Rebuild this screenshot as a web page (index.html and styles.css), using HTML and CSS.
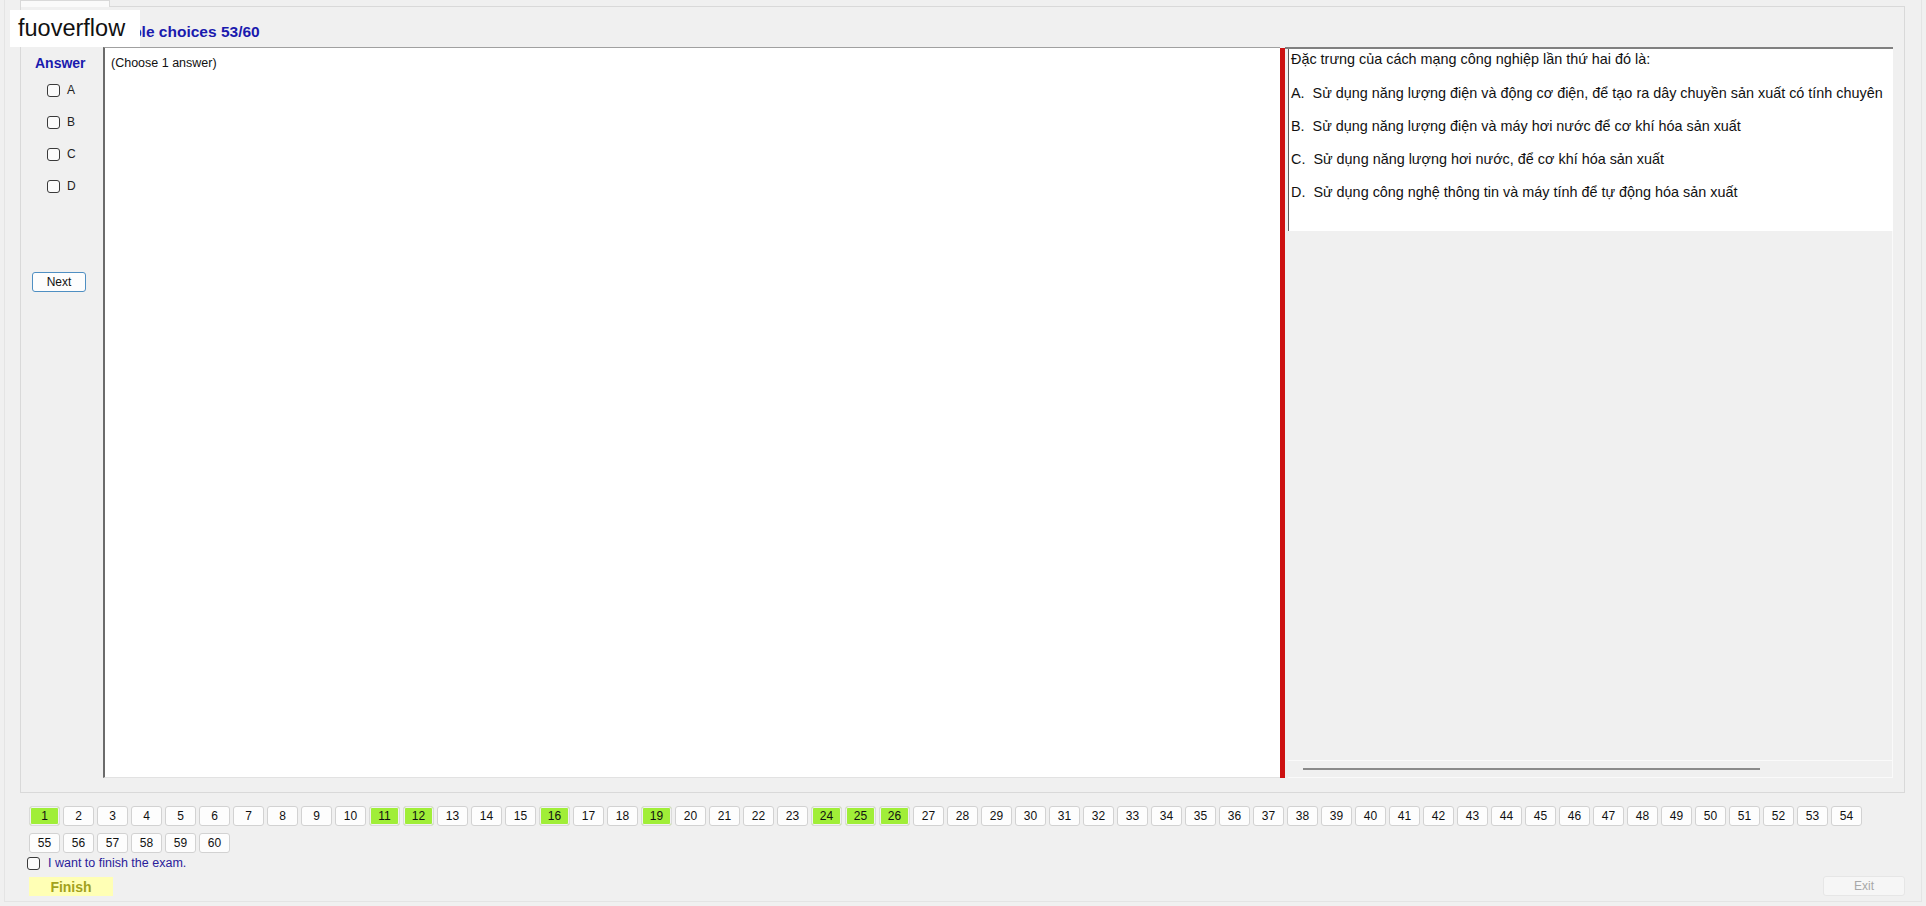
FILE: index.html
```html
<!DOCTYPE html>
<html lang="vi">
<head>
<meta charset="utf-8">
<title>Exam</title>
<link rel="stylesheet" href="styles.css">
</head>
<body>
<div class="window">
  <div class="tabs"><div class="tab"></div></div>
  <div class="tabpage">
    <div class="title-row">Multiple choices 53/60</div>
    <div class="main">
      <div class="answer-col">
        <div class="answer-label">Answer</div>
        <div class="opts">
          <label class="opt"><span class="cb"></span>A</label>
          <label class="opt"><span class="cb"></span>B</label>
          <label class="opt"><span class="cb"></span>C</label>
          <label class="opt"><span class="cb"></span>D</label>
        </div>
        <button class="next">Next</button>
      </div>
      <div class="question"><div class="hint">(Choose 1 answer)</div></div>
      <div class="divider"></div>
      <div class="content-panel">
        <div class="content-box">
          <p class="q-title">Đặc trưng của cách mạng công nghiệp lần thứ hai đó là:</p>
          <p class="q-opt">A.&nbsp; Sử dụng năng lượng điện và động cơ điện, để tạo ra dây chuyền sản xuất có tính chuyên</p>
          <p class="q-opt">B.&nbsp; Sử dụng năng lượng điện và máy hơi nước để cơ khí hóa sản xuất</p>
          <p class="q-opt">C.&nbsp; Sử dụng năng lượng hơi nước, để cơ khí hóa sản xuất</p>
          <p class="q-opt">D.&nbsp; Sử dụng công nghệ thông tin và máy tính để tự động hóa sản xuất</p>
        </div>
        <div class="filler"></div>
        <div class="hscroll"><div class="thumb"></div></div>
      </div>
    </div>
  </div>
  <div class="footer">
    <div class="qnums">
      <button class="qn done">1</button><button class="qn">2</button><button class="qn">3</button><button class="qn">4</button><button class="qn">5</button><button class="qn">6</button><button class="qn">7</button><button class="qn">8</button><button class="qn">9</button><button class="qn">10</button>
      <button class="qn done">11</button><button class="qn done">12</button><button class="qn">13</button><button class="qn">14</button><button class="qn">15</button><button class="qn done">16</button><button class="qn">17</button><button class="qn">18</button><button class="qn done">19</button><button class="qn">20</button>
      <button class="qn">21</button><button class="qn">22</button><button class="qn">23</button><button class="qn done">24</button><button class="qn done">25</button><button class="qn done">26</button><button class="qn">27</button><button class="qn">28</button><button class="qn">29</button><button class="qn">30</button>
      <button class="qn">31</button><button class="qn">32</button><button class="qn">33</button><button class="qn">34</button><button class="qn">35</button><button class="qn">36</button><button class="qn">37</button><button class="qn">38</button><button class="qn">39</button><button class="qn">40</button>
      <button class="qn">41</button><button class="qn">42</button><button class="qn">43</button><button class="qn">44</button><button class="qn">45</button><button class="qn">46</button><button class="qn">47</button><button class="qn">48</button><button class="qn">49</button><button class="qn">50</button>
      <button class="qn">51</button><button class="qn">52</button><button class="qn">53</button><button class="qn">54</button><button class="qn">55</button><button class="qn">56</button><button class="qn">57</button><button class="qn">58</button><button class="qn">59</button><button class="qn">60</button>
    </div>
    <label class="finish-check"><span class="cb"></span>I want to finish the exam.</label>
    <div class="actions">
      <button class="finish">Finish</button>
      <button class="exit">Exit</button>
    </div>
  </div>
</div>
<div class="watermark">fuoverflow</div>
</body>
</html>
```

FILE: styles.css
```css
* { box-sizing: border-box; }
html, body { margin: 0; padding: 0; }
body {
  background: #f0f0f0;
  font-family: "Liberation Sans", Arial, sans-serif;
  color: #111;
  position: relative;
}
button { font-family: "Liberation Sans", Arial, sans-serif; cursor: default; }

.window {
  margin-left: 4px;
  width: 1918px;
  height: 902px;
  border: 1px solid #e4e4e4;
  border-top: none;
  padding: 0 16px 0 15px;
  display: flex;
  flex-direction: column;
}

.tabs { height: 6px; display: flex; }
.tab {
  width: 90px;
  height: 7px;
  background: #fafafa;
  border: 1px solid #d9d9d9;
  border-bottom: none;
  position: relative;
  z-index: 1;
}

.tabpage {
  height: 787px;
  border: 1px solid #d9d9d9;
  display: flex;
  flex-direction: column;
}

.title-row {
  height: 40px;
  padding: 16px 0 0 75px;
  font-size: 15.5px;
  line-height: 18px;
  font-weight: bold;
  color: #1a1aae;
}

.main { height: 731px; display: flex; }

.answer-col {
  width: 82px;
  display: flex;
  flex-direction: column;
  align-items: flex-start;
}
.answer-label {
  margin: 8px 0 0 14px;
  font-size: 14px;
  line-height: 16px;
  font-weight: bold;
  color: #1a1aae;
}
.opts { margin-top: 3px; padding-left: 26px; display: flex; flex-direction: column; }
.opt {
  height: 32px;
  display: flex;
  align-items: center;
  gap: 7px;
  font-size: 12px;
  color: #222;
}
.cb {
  display: inline-block;
  width: 13px;
  height: 13px;
  border: 1px solid #3a3a3a;
  border-radius: 3px;
  background: #fbfbfb;
  flex: none;
}
.next {
  margin: 70px 0 0 11px;
  width: 54px;
  height: 20px;
  padding: 0;
  font-size: 12px;
  color: #111;
  background: #fdfdfd;
  border: 1px solid #4f8fc2;
  border-radius: 3px;
}

.question {
  width: 1177px;
  height: 731px;
  background: #fff;
  border-left: 2px solid #6b6b6b;
  border-top: 1px solid #a0a0a0;
  border-bottom: 1px solid #e2e2e2;
  padding: 7px 0 0 6px;
}
.hint { font-size: 12.5px; line-height: 16px; color: #111; }

.divider {
  width: 5px;
  margin-top: 1px;
  background: #cd1111;
}

.content-panel {
  width: 608px;
  border-top: 2px solid #808080;
  padding-left: 3px;
  display: flex;
  flex-direction: column;
}
.content-box {
  height: 182px;
  background: #fff;
  border-left: 1px solid #5e5e5e;
  padding: 1px 0 0 2px;
  overflow: hidden;
  white-space: nowrap;
  font-size: 14.4px;
  line-height: 18px;
  color: #111;
}
.content-box p { margin: 0; }
.content-box .q-opt { margin-top: 15px; }
.content-box .q-title + .q-opt { margin-top: 16px; }
.filler { flex: 1; border-right: 1px solid #fafafa; }
.hscroll {
  height: 18px;
  border-top: 1px solid #fafafa;
  border-bottom: 1px solid #fafafa;
  border-right: 1px solid #fafafa;
  padding: 7px 0 0 15px;
}
.thumb { width: 457px; height: 2px; background: #8a8a8a; }

.footer { display: flex; flex-direction: column; }
.qnums {
  margin-top: 13px;
  padding-left: 9px;
  width: 1850px;
  display: flex;
  flex-wrap: wrap;
  gap: 7px 3px;
}
.qn {
  width: 31px;
  height: 20px;
  padding: 0;
  font-size: 12px;
  color: #111;
  background: #fdfdfd;
  border: 1px solid #d2d2d2;
  border-radius: 3px;
}
.qn.done {
  background: #a0ee38;
  border-color: #dadada;
  box-shadow: inset 0 0 0 1px #f2f2f2;
}

.finish-check {
  margin-top: 3px;
  padding-left: 7px;
  height: 14px;
  display: flex;
  align-items: center;
  gap: 8px;
  font-size: 12.5px;
  line-height: 14px;
  color: #2a209a;
}
.actions {
  margin-top: 7px;
  display: flex;
  justify-content: space-between;
  align-items: flex-start;
}
.finish {
  margin-left: 9px;
  width: 84px;
  height: 19px;
  padding: 0;
  border: none;
  background: #ffffb5;
  color: #a2a21c;
  font-size: 14px;
  font-weight: bold;
}
.exit {
  margin-top: -1px;
  width: 82px;
  height: 20px;
  padding: 0;
  font-size: 12px;
  color: #a8a8a8;
  background: #f6f6f6;
  border: 1px solid #e6e6e6;
  border-radius: 3px;
}

.watermark {
  position: absolute;
  left: 10px;
  top: 10px;
  width: 130px;
  height: 37px;
  background: #fff;
  padding-left: 8px;
  font-size: 23.5px;
  line-height: 37px;
  color: #111;
  z-index: 5;
}
```
